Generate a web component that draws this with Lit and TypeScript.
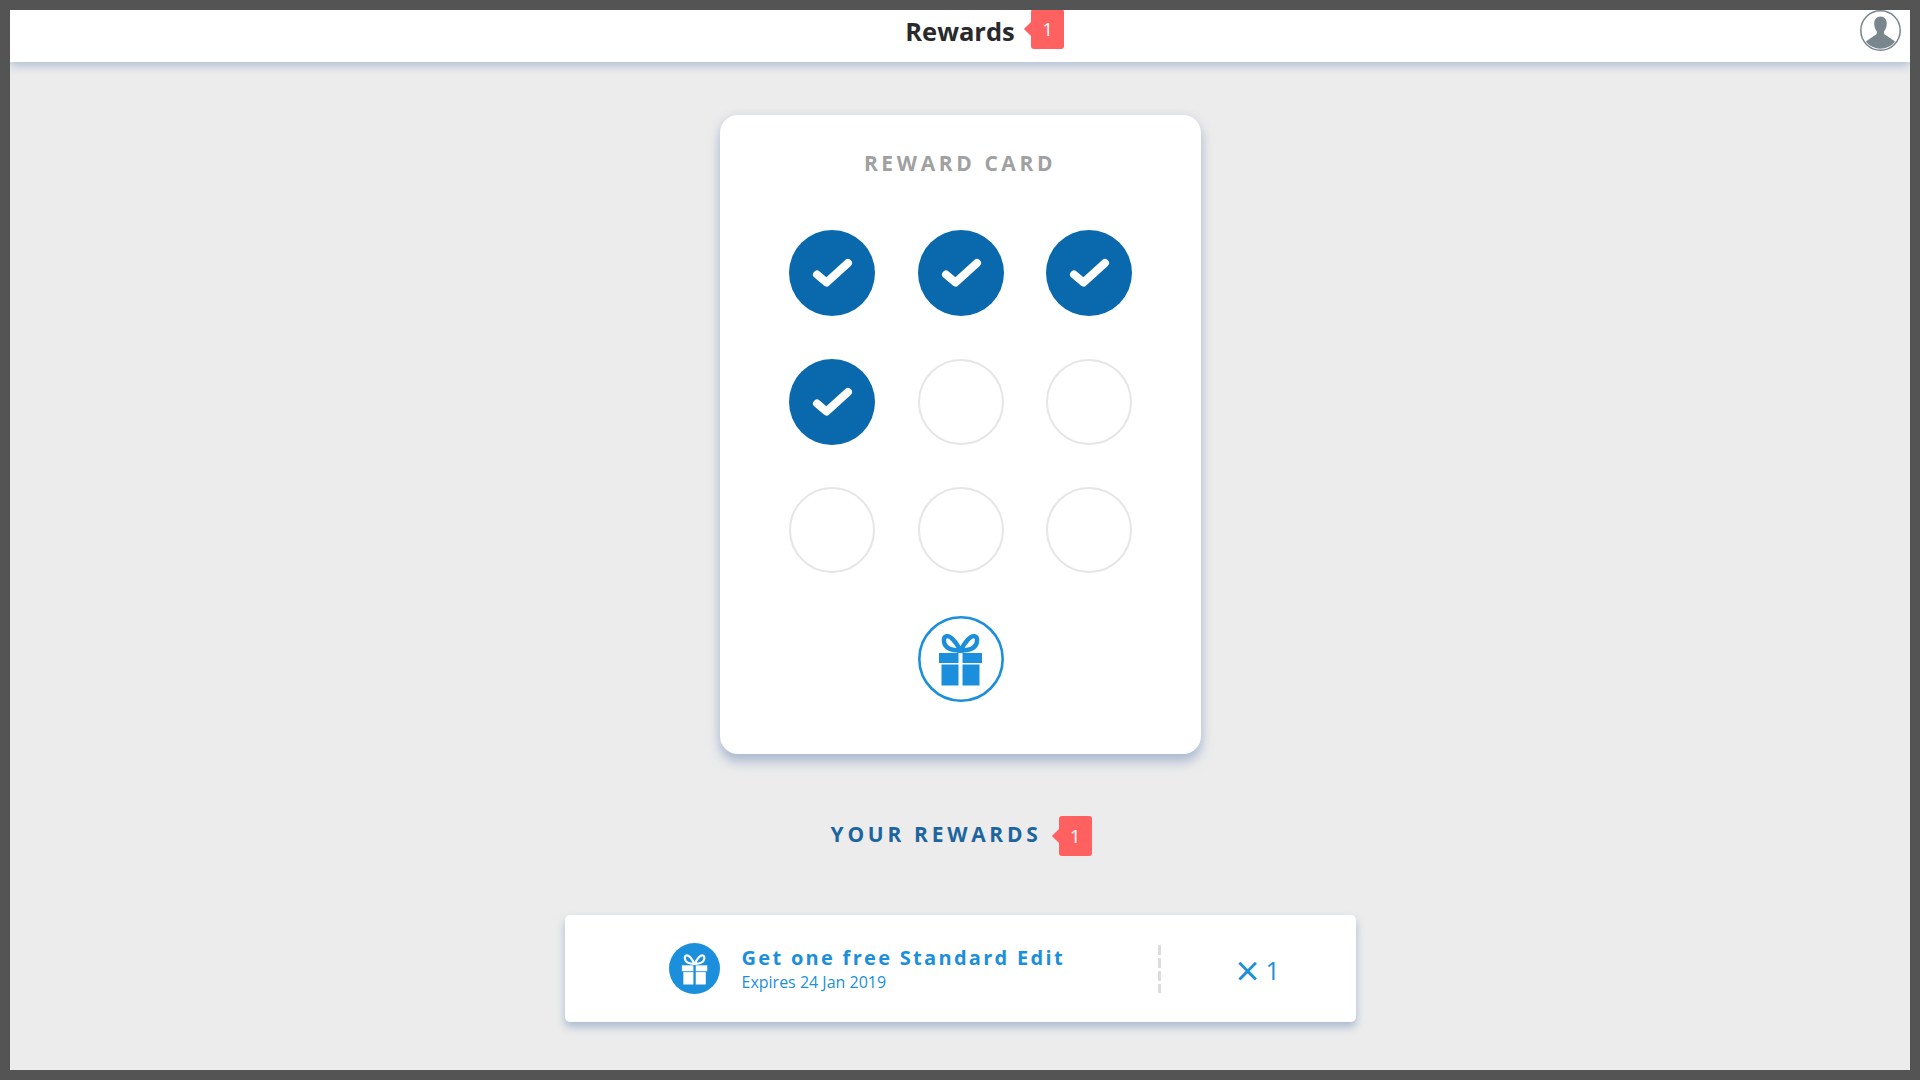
import { LitElement, html, css, svg } from "lit";
import { customElement } from "lit/decorators.js";

const gift = (color: string, sw = 4.4) => svg`
  <path d="M42.5 34.5C37 24 31.5 19.5 28.5 20.2C24.5 21.2 25 29.5 31 32.5C34.5 34.2 39 34.5 42.5 34.5Z" fill="none" stroke=${color} stroke-width=${sw}/>
  <path d="M42.5 34.5C48 24 53.5 19.5 56.5 20.2C60.5 21.2 60 29.5 54 32.5C50.5 34.2 46 34.5 42.5 34.5Z" fill="none" stroke=${color} stroke-width=${sw}/>
  <rect x="21" y="37" width="19.5" height="10" fill=${color}/>
  <rect x="44.5" y="37" width="19.5" height="10" fill=${color}/>
  <rect x="23.5" y="48.5" width="17" height="21" fill=${color}/>
  <rect x="44.5" y="48.5" width="17" height="21" fill=${color}/>`;

@customElement("app-root")
export class AppRoot extends LitElement {
  static styles = css`
    :host {
      display: block;
      width: 1920px;
      height: 1080px;
      font-family: "Open Sans", "Liberation Sans", sans-serif;
    }
    .frame {
      box-sizing: border-box;
      width: 1920px;
      height: 1080px;
      padding: 10px;
      background: #545454;
    }
    .screen {
      height: 1060px;
      background: #ececec;
      display: flex;
      flex-direction: column;
      align-items: center;
      overflow: hidden;
    }
    .header {
      position: relative;
      align-self: stretch;
      height: 52px;
      background: #fff;
      box-shadow: 0 3px 10px rgba(125, 150, 190, 0.6);
      display: flex;
      justify-content: center;
      align-items: center;
      flex: none;
    }
    .page-title {
      position: relative;
      font-size: 25.5px;
      line-height: 44px;
      margin-top: -10px;
      font-weight: 700;
      color: #2a2a2c;
    }
    .badge {
      position: absolute;
      width: 33px;
      height: 40px;
      background: #ff6161;
      border-radius: 3px;
      color: #fff;
      font-size: 19px;
      line-height: 40px;
      text-align: center;
      font-weight: 400;
      letter-spacing: 0;
    }
    .badge::before {
      content: "";
      position: absolute;
      left: -5px;
      top: 15px;
      width: 10px;
      height: 10px;
      background: #ff6161;
      transform: rotate(45deg);
    }
    .page-title .badge { left: 126px; top: 0; }
    .avatar {
      position: absolute;
      right: 9px;
      top: 0;
      width: 41px;
      height: 41px;
    }
    .card {
      box-sizing: border-box;
      width: 481px;
      height: 639px;
      margin-top: 53px;
      padding-top: 33px;
      background: #fff;
      border-radius: 18px;
      box-shadow: 0 8px 12px rgba(125, 150, 190, 0.55), 0 0 10px rgba(125, 150, 190, 0.14);
      display: flex;
      flex-direction: column;
      align-items: center;
      flex: none;
    }
    .card-title {
      font-size: 21px;
      line-height: 30px;
      font-weight: 700;
      letter-spacing: 3.6px;
      color: #a0a0a0;
    }
    .grid {
      margin-top: 52px;
      margin-left: 1px;
      display: grid;
      grid-template-columns: repeat(3, 86px);
      grid-auto-rows: 86px;
      gap: 42.5px;
    }
    .stamp {
      box-sizing: border-box;
      width: 86px;
      height: 86px;
      border-radius: 50%;
      border: 2.5px solid #e6e6e6;
    }
    .stamp.done {
      border: none;
      background: #0a69ad;
    }
    .stamp svg, .prize svg, .reward-icon svg { display: block; }
    .prize { grid-column: 2; width: 86px; height: 86px; }
    .section {
      position: relative;
      margin-top: 65px;
      font-size: 21px;
      line-height: 30px;
      font-weight: 700;
      letter-spacing: 3.7px;
      color: #1d659f;
      transform: translateX(-24px);
      flex: none;
    }
    .section .badge { left: 228px; top: -3px; }
    .reward {
      box-sizing: border-box;
      width: 791px;
      height: 107px;
      margin-top: 66px;
      padding-left: 104px;
      background: #fff;
      border-radius: 5px;
      box-shadow: 0 5px 9px rgba(125, 150, 190, 0.6);
      display: flex;
      align-items: center;
      flex: none;
    }
    .reward-icon { width: 51px; height: 51px; flex: none; margin-top: -1px; }
    .reward-text { margin-left: 22px; width: 416px; color: #1b8fdb; flex: none; }
    .reward-name {
      font-size: 20px;
      line-height: 26px;
      font-weight: 700;
      letter-spacing: 2.3px;
    }
    .reward-date { font-size: 16px; line-height: 22px; }
    .divider {
      width: 3px;
      height: 48px;
      flex: none;
      background: repeating-linear-gradient(to bottom, #dcdcdc 0 10px, transparent 10px 13px);
    }
    .count {
      margin-left: 75px;
      margin-top: 3px;
      color: #1b8fdb;
      font-size: 25px;
      line-height: 30px;
      display: flex;
      align-items: center;
      gap: 6px;
    }
    .times { font-size: 42px; line-height: 30px; font-weight: 400; }
  `;

  render() {
    const done = [1, 1, 1, 1, 0, 0, 0, 0, 0];
    return html`
      <div class="frame">
        <div class="screen">
          <header class="header">
            <div class="page-title">Rewards<span class="badge">1</span></div>
            <svg class="avatar" viewBox="0 0 41 41">
              <circle cx="20.5" cy="20.5" r="19.7" fill="#fff" stroke="#7a868d" stroke-width="1.5"/>
              <path d="M20.5 6.5c-3.8 0-6.3 3-6.3 7 0 3.5 1.3 6.3 2.6 8 .4 1.6-.2 3-1.6 3.6L5.8 31.5A18.5 18.5 0 0 0 35.2 31.5L25.6 25.1c-1.4-.6-2-2-1.6-3.6 1.3-1.7 2.8-4.5 2.8-8 0-4-2.5-7-6.3-7z" fill="#7a868d"/>
            </svg>
          </header>
          <section class="card">
            <div class="card-title">REWARD CARD</div>
            <div class="grid">
              ${done.map((d) =>
                d
                  ? html`<div class="stamp done">
                      <svg width="86" height="86" viewBox="0 0 86 86">
                        <path d="M28 44.5L37.5 52.5L59 33" fill="none" stroke="#fff" stroke-width="8" stroke-linecap="round" stroke-linejoin="round"/>
                      </svg>
                    </div>`
                  : html`<div class="stamp"></div>`
              )}
              <div class="prize">
                <svg width="86" height="86" viewBox="0 0 86 86">
                  <circle cx="43" cy="43" r="41.7" fill="none" stroke="#1b8fdb" stroke-width="2.6"/>
                  ${gift("#1b8fdb")}
                </svg>
              </div>
            </div>
          </section>
          <div class="section">YOUR REWARDS<span class="badge">1</span></div>
          <section class="reward">
            <div class="reward-icon">
              <svg width="51" height="51" viewBox="0 0 51 51">
                <circle cx="25.5" cy="25.5" r="25.5" fill="#1b8fdb"/>
                <g transform="translate(0.5 0.5) scale(0.59)">${gift("#fff", 3.6)}</g>
              </svg>
            </div>
            <div class="reward-text">
              <div class="reward-name">Get one free Standard Edit</div>
              <div class="reward-date">Expires 24 Jan 2019</div>
            </div>
            <div class="divider"></div>
            <div class="count"><span class="times">×</span><span>1</span></div>
          </section>
        </div>
      </div>
    `;
  }
}
